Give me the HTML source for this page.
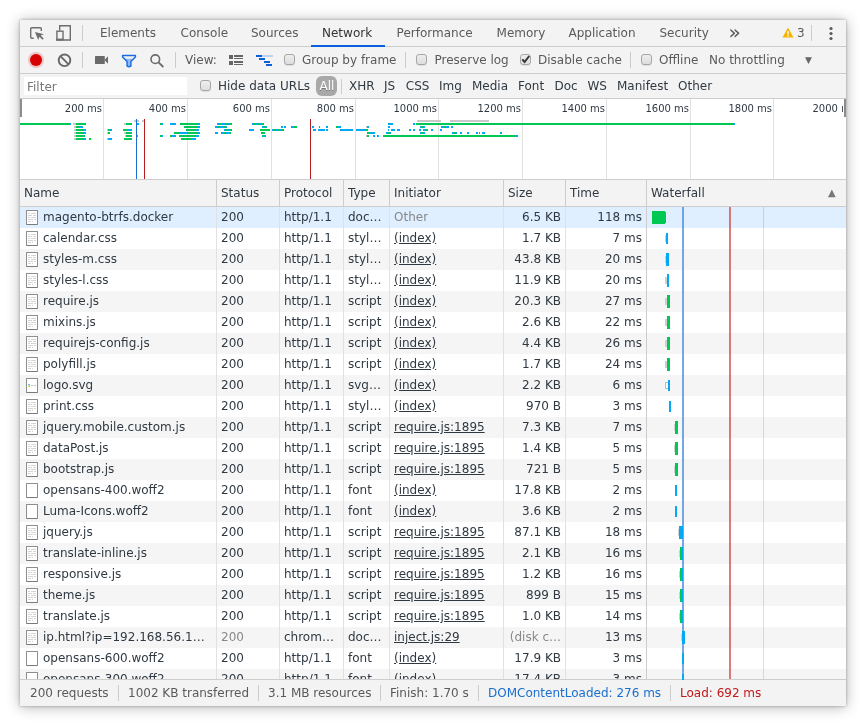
<!DOCTYPE html>
<html><head><meta charset="utf-8"><title>DevTools Network</title>
<style>
*{box-sizing:border-box;margin:0;padding:0}
html,body{width:866px;height:726px;background:#fff;overflow:hidden}
body{font-family:"DejaVu Sans","Liberation Sans",sans-serif;font-size:12px;color:#303942;position:relative}
#win{will-change:transform;position:absolute;left:20px;top:20px;width:826px;height:686px;background:#fff;overflow:hidden;box-shadow:0 0 3px rgba(0,0,0,.3),0 1px 13px rgba(0,0,0,.3)}
.tb{position:absolute;left:0;width:826px;height:27px;background:#f3f3f3;border-bottom:1px solid #cdcdcd}
#tb1{top:0}#tb2{top:27px}#tb3{top:54px;height:25px}
.t{position:absolute;white-space:nowrap;line-height:16px}
.tab{color:#5a5a5a;top:5px;font-size:12px}
.vsep{position:absolute;width:1px;background:#ccc}
#ov{position:absolute;left:0;top:79px;width:826px;height:81px;background:#fff;border-bottom:1px solid #cdcdcd;overflow:hidden}
#ov .g{position:absolute;top:0;width:1px;height:81px;background:#e1e1e1}
#ov .l{position:absolute;top:3px;font-size:10px;color:#303942;text-align:right;width:80px;line-height:14px;white-space:nowrap}
#ov i{position:absolute;display:block;height:2px}
#ov .v{position:absolute;top:20px;width:1px;height:60px}
#ov .h{position:absolute;top:0;width:2px;height:18px;background:#8c8c8c}
#hd{position:absolute;left:0;top:160px;width:826px;height:27px;background:#f3f3f3;border-bottom:1px solid #cdcdcd}
#hd span{position:absolute;top:0;height:26px;line-height:27px;padding-left:4px;border-left:1px solid #cdcdcd;font-size:12px;color:#303942}
#rows{position:absolute;left:0;top:187px;width:826px;height:473px;overflow:hidden}
.row{position:relative;height:21px;width:826px;background:#fff}
.row.odd{background:#f5f5f5}
.row.sel{background:#dfefff}
.c{position:absolute;top:0;height:21px;line-height:20px;white-space:nowrap;overflow:hidden;padding-left:4px;border-left:1px solid #e1e1e1;font-size:12px}
.c1{left:0;width:196px;border-left:0;padding-left:23px}
.c2{left:196px;width:63px}
.c3{left:259px;width:64px}
.c4{left:323px;width:46px}
.c5{left:369px;width:114px}
.c6{left:483px;width:62px;text-align:right;padding-right:4px}
.c7{left:545px;width:81px;text-align:right;padding-right:4px}
.c8{left:626px;width:200px;padding:0;border-left-color:#cdcdcd}
.c8 b{position:absolute;display:block}
.c u{text-decoration:none}
.lnk u{text-decoration:underline}
.gray{color:#888}
.dim{color:#888}
.ic{position:absolute;left:6px;top:3px;width:12px;height:15px;border:1px solid #8e8e8e;border-bottom-color:#7a7a7a;background:#fff;border-radius:1px}
.ic.doc:before{content:"";position:absolute;left:1px;top:2px;width:8px;height:9px;background:
linear-gradient(90deg,#d4d4d4 2px,transparent 2px,transparent 3px,#d4d4d4 3px) 0 0/8px 1px no-repeat,
linear-gradient(90deg,#d4d4d4 4px,transparent 4px,transparent 5px,#d4d4d4 5px) 0 2px/8px 1px no-repeat,
linear-gradient(90deg,#d4d4d4 2px,transparent 2px,transparent 3px,#d4d4d4 3px) 0 4px/8px 1px no-repeat,
linear-gradient(90deg,#d4d4d4 5px,transparent 5px,transparent 6px,#d4d4d4 6px) 0 6px/8px 1px no-repeat,
linear-gradient(90deg,#d4d4d4 3px,transparent 3px,transparent 4px,#d4d4d4 4px,#d4d4d4 5px,transparent 5px) 0 8px/8px 1px no-repeat}
.ic.img:before{content:"";position:absolute;left:1px;top:5px;width:8px;height:3px;background:
linear-gradient(90deg,#6ec6f0 1px,#9ccc65 1px) 0 0/2px 1px no-repeat,
linear-gradient(90deg,#c5e1a5 1px,#ffb199 1px) 0 1px/2px 1px no-repeat,
linear-gradient(90deg,#ffe96b 1px,#ef8a80 1px) 0 2px/2px 1px no-repeat,
linear-gradient(90deg,#c4c4c4 2px,transparent 2px,transparent 3px,#c4c4c4 3px) 3px 1px/5px 1px no-repeat}
#wl1,#wl2,#wl3{position:absolute;top:187px;height:473px}
#wl1{left:662px;width:2px;background:rgba(70,140,220,.75)}
#wl2{left:709px;width:2px;background:rgba(205,60,60,.68)}
#wl3{left:743px;width:1px;background:rgba(0,0,0,.12)}
#sb{position:absolute;left:0;top:659px;width:826px;height:27px;background:#f3f3f3;border-top:1px solid #cdcdcd}
#sb .t{top:5px;font-size:12px;color:#5a5a5a}
.cb{position:absolute;width:11px;height:11px;border:1px solid #a6a6a6;border-radius:3px;background:linear-gradient(#eee,#dedede);box-shadow:0 1px 0 rgba(0,0,0,.08)}
</style></head><body>
<div id="win">
 <div class="tb" id="tb1">
  <svg class="t" style="left:8px;top:5px" width="18" height="18" viewBox="0 0 18 18"><path d="M13.300 6V3.700a1 1 0 0 0-1-1H3.700a1 1 0 0 0-1 1v8.600a1 1 0 0 0 1 1H5.700" fill="none" stroke="#6e6e6e" stroke-width="1.400"/><path d="M7 7l3.200 8 1.300-3.200 3 3 1.200-1.200-3-3 3.200-1.300z" fill="#6e6e6e"/></svg>
  <svg class="t" style="left:34px;top:4px" width="20" height="18" viewBox="0 0 20 18"><path d="M5.700 6.500V1.700H16.300V16H9.500" fill="none" stroke="#6e6e6e" stroke-width="1.400"/><rect x="2.900" y="7.200" width="6.100" height="8.800" fill="none" stroke="#6e6e6e" stroke-width="1.400"/><rect x="2.200" y="14.600" width="7.500" height="2.100" fill="#6e6e6e"/></svg>
  <div class="vsep" style="left:62px;top:5px;height:16px"></div>
  <div class="t tab" style="left:80px">Elements</div>
  <div class="t tab" style="left:160.500px">Console</div>
  <div class="t tab" style="left:231px">Sources</div>
  <div class="t tab" style="left:302px;color:#333">Network</div>
  <div style="position:absolute;left:291px;top:25px;width:74px;height:2px;background:#0a60e0"></div>
  <div class="t tab" style="left:376.600px">Performance</div>
  <div class="t tab" style="left:476.600px">Memory</div>
  <div class="t tab" style="left:548.500px">Application</div>
  <div class="t tab" style="left:639.500px">Security</div>
  <div class="t tab" style="left:708.500px;font-size:20px;top:3.500px">»</div>
  <svg class="t" style="left:762px;top:7px" width="12" height="12" viewBox="0 0 12 12"><path d="M6 0.500L11.500 10.500H0.500z" fill="#f4b400"/><rect x="5.300" y="4" width="1.400" height="3.500" fill="#fff"/><rect x="5.300" y="8.300" width="1.400" height="1.300" fill="#fff"/></svg>
  <div class="t tab" style="left:777px">3</div>
  <div class="vsep" style="left:791px;top:5px;height:16px"></div>
  <svg class="t" style="left:807.500px;top:6px" width="6" height="16" viewBox="0 0 6 16"><circle cx="3" cy="2.500" r="1.600" fill="#5a5a5a"/><circle cx="3" cy="7.500" r="1.600" fill="#5a5a5a"/><circle cx="3" cy="12.500" r="1.600" fill="#5a5a5a"/></svg>
 </div>
 <div class="tb" id="tb2">
  <div style="position:absolute;left:10px;top:7px;width:12px;height:12px;border-radius:6px;background:#d80000;box-shadow:0 0 1px 2px rgba(216,0,0,.2)"></div>
  <svg class="t" style="left:37px;top:6px" width="15" height="15" viewBox="0 0 15 15"><circle cx="7.500" cy="7.300" r="5.800" fill="none" stroke="#686868" stroke-width="1.900"/><path d="M3.400 3.200L11.600 11.400" stroke="#686868" stroke-width="1.900"/></svg>
  <div class="vsep" style="left:62px;top:5px;height:16px"></div>
  <svg class="t" style="left:75px;top:8px" width="14" height="10" viewBox="0 0 14 10"><rect x="0" y="1" width="9.800" height="8" rx="0.600" fill="#6a6a6a"/><path d="M9.500 5L13 1.300V8.700z" fill="#6a6a6a"/></svg>
  <svg class="t" style="left:101px;top:7px" width="16" height="14" viewBox="0 0 16 14"><path d="M3.500 4.700H12.500L9.500 7.500V12H6.500V7.500z" fill="#8fb9f4"/><path d="M1.600 1.600H14.400V3L9.900 7.600V12.100Q8 13.300 6.100 12.100V7.600L1.600 3z" fill="none" stroke="#1a6de0" stroke-width="1.500" stroke-linejoin="round"/></svg>
  <svg class="t" style="left:129px;top:7px" width="16" height="15" viewBox="0 0 16 15"><circle cx="6.300" cy="5.200" r="4.300" fill="none" stroke="#6a6a6a" stroke-width="1.600"/><path d="M9.300 8.200L14.300 13" stroke="#6a6a6a" stroke-width="1.800"/></svg>
  <div class="vsep" style="left:155px;top:5px;height:16px"></div>
  <div class="t" style="left:165px;top:5px;color:#5a5a5a;font-size:12px">View:</div>
  <svg class="t" style="left:209px;top:8px" width="14" height="10" viewBox="0 0 14 10"><g fill="#666"><rect x="0" y="0" width="4" height="4"/><rect x="5" y="0" width="9" height="2"/><rect x="5" y="3" width="9" height="1"/><rect x="0" y="6" width="4" height="4"/><rect x="5" y="6" width="9" height="2"/><rect x="5" y="9" width="9" height="1"/></g></svg>
  <svg class="t" style="left:236px;top:8px" width="17" height="11" viewBox="0 0 17 11"><g fill="#0b60dc"><rect x="0" y="0" width="6" height="2"/><rect x="3" y="3" width="6" height="2"/><rect x="8" y="6" width="6" height="2"/><rect x="10" y="9" width="6" height="2"/></g><rect x="6" y="0" width="11" height="2" fill="#bcd3f5"/></svg>
  <div class="cb" style="left:264px;top:7px"></div>
  <div class="t" style="left:282px;top:5px;color:#5a5a5a;font-size:12px">Group by frame</div>
  <div class="vsep" style="left:385px;top:5px;height:16px"></div>
  <div class="cb" style="left:396px;top:7px"></div>
  <div class="t" style="left:414.500px;top:5px;color:#5a5a5a;font-size:12px">Preserve log</div>
  <div class="cb" style="left:500px;top:7px"></div>
  <svg class="t" style="left:501px;top:8px" width="10" height="10" viewBox="0 0 10 10"><path d="M1.300 4.300L3.600 7 8.200 1" fill="none" stroke="#333" stroke-width="2"/></svg>
  <div class="t" style="left:518px;top:5px;color:#5a5a5a;font-size:12px">Disable cache</div>
  <div class="vsep" style="left:610px;top:5px;height:16px"></div>
  <div class="cb" style="left:621px;top:7px"></div>
  <div class="t" style="left:639px;top:5px;color:#5a5a5a;font-size:12px">Offline</div>
  <div class="t" style="left:689px;top:5px;color:#5a5a5a;font-size:12px">No throttling</div>
  <div class="t" style="left:785px;top:4.500px;color:#666;font-size:9px">▼</div>
 </div>
 <div class="tb" id="tb3">
  <div style="position:absolute;left:4px;top:3px;width:163px;height:18px;background:#fff"></div>
  <div class="t" style="left:7px;top:5px;color:#777;font-size:12px">Filter</div>
  <div class="cb" style="left:180px;top:6px"></div>
  <div class="t" style="left:198px;top:4px;color:#303942;font-size:12px">Hide data URLs</div>
  <div style="position:absolute;left:296px;top:2px;width:21px;height:20px;border-radius:6px;background:#a8a8a8"></div>
  <div class="t" style="left:299.500px;top:4px;color:#fff;font-size:12px;text-shadow:0 1px 0 rgba(0,0,0,.3)">All</div>
  <div class="vsep" style="left:321px;top:5px;height:15px"></div>
  <div class="t" style="left:329px;top:4px;color:#303942;font-size:12px">XHR</div>
  <div class="t" style="left:364px;top:4px;color:#303942;font-size:12px">JS</div>
  <div class="t" style="left:385.800px;top:4px;color:#303942;font-size:12px">CSS</div>
  <div class="t" style="left:419px;top:4px;color:#303942;font-size:12px">Img</div>
  <div class="t" style="left:452px;top:4px;color:#303942;font-size:12px">Media</div>
  <div class="t" style="left:498px;top:4px;color:#303942;font-size:12px">Font</div>
  <div class="t" style="left:534.500px;top:4px;color:#303942;font-size:12px">Doc</div>
  <div class="t" style="left:567.500px;top:4px;color:#303942;font-size:12px">WS</div>
  <div class="t" style="left:597px;top:4px;color:#303942;font-size:12px">Manifest</div>
  <div class="t" style="left:658px;top:4px;color:#303942;font-size:12px">Other</div>
 </div>
 <div id="ov">
  <div class="g" style="left:83px"></div>
<div class="l" style="left:2px">200 ms</div>
<div class="g" style="left:167px"></div>
<div class="l" style="left:86px">400 ms</div>
<div class="g" style="left:251px"></div>
<div class="l" style="left:170px">600 ms</div>
<div class="g" style="left:335px"></div>
<div class="l" style="left:254px">800 ms</div>
<div class="g" style="left:418px"></div>
<div class="l" style="left:337px">1000 ms</div>
<div class="g" style="left:502px"></div>
<div class="l" style="left:421px">1200 ms</div>
<div class="g" style="left:586px"></div>
<div class="l" style="left:505px">1400 ms</div>
<div class="g" style="left:670px"></div>
<div class="l" style="left:589px">1600 ms</div>
<div class="g" style="left:753px"></div>
<div class="l" style="left:672px">1800 ms</div>
<div class="l" style="left:754px;text-align:left;width:30.500px;overflow:hidden;left:792.500px">2000 ms</div>
<i style="left:0px;top:24px;width:49px;background:#00c853"></i>
<i style="left:49px;top:24px;width:1.5px;background:#03a9f4"></i>
<i style="left:53px;top:24px;width:3px;background:#c8c8c8"></i>
<i style="left:56px;top:24px;width:9.5px;background:#00c853"></i>
<i style="left:54px;top:27px;width:2px;background:#c8c8c8"></i>
<i style="left:56px;top:27px;width:3px;background:#00c853"></i>
<i style="left:59px;top:27px;width:4px;background:#03a9f4"></i>
<i style="left:54px;top:30px;width:2px;background:#c8c8c8"></i>
<i style="left:56px;top:30px;width:7px;background:#00c853"></i>
<i style="left:63px;top:30px;width:2.5px;background:#03a9f4"></i>
<i style="left:54px;top:33px;width:2px;background:#c8c8c8"></i>
<i style="left:56px;top:33px;width:7px;background:#00c853"></i>
<i style="left:63px;top:33px;width:3px;background:#03a9f4"></i>
<i style="left:54px;top:36px;width:2px;background:#c8c8c8"></i>
<i style="left:56px;top:36px;width:8.5px;background:#00c853"></i>
<i style="left:54px;top:39px;width:2px;background:#c8c8c8"></i>
<i style="left:56px;top:39px;width:8px;background:#00c853"></i>
<i style="left:64px;top:39px;width:2px;background:#03a9f4"></i>
<i style="left:69px;top:39px;width:1.5px;background:#00c853"></i>
<i style="left:87px;top:30px;width:1px;background:#c8c8c8"></i>
<i style="left:88px;top:30px;width:2px;background:#00c853"></i>
<i style="left:90px;top:30px;width:2px;background:#03a9f4"></i>
<i style="left:87px;top:33px;width:1px;background:#c8c8c8"></i>
<i style="left:88px;top:33px;width:1.5px;background:#00c853"></i>
<i style="left:86.5px;top:39px;width:1.5px;background:#c8c8c8"></i>
<i style="left:88px;top:39px;width:4px;background:#03a9f4"></i>
<i style="left:104px;top:24px;width:2px;background:#c8c8c8"></i>
<i style="left:106px;top:24px;width:6px;background:#00c853"></i>
<i style="left:116px;top:24px;width:3px;background:#03a9f4"></i>
<i style="left:103px;top:30px;width:4px;background:#00c853"></i>
<i style="left:107px;top:30px;width:4.5px;background:#03a9f4"></i>
<i style="left:104px;top:33px;width:2px;background:#c8c8c8"></i>
<i style="left:106px;top:33px;width:5.5px;background:#00c853"></i>
<i style="left:105px;top:36px;width:1px;background:#c8c8c8"></i>
<i style="left:106px;top:36px;width:5.5px;background:#00c853"></i>
<i style="left:115.5px;top:36px;width:2.5px;background:#03a9f4"></i>
<i style="left:104px;top:39px;width:7.5px;background:#00c853"></i>
<i style="left:140px;top:24px;width:1.5px;background:#00c853"></i>
<i style="left:141.5px;top:24px;width:1.5px;background:#03a9f4"></i>
<i style="left:150px;top:24px;width:6px;background:#03a9f4"></i>
<i style="left:160px;top:24px;width:9px;background:#00c853"></i>
<i style="left:169px;top:24px;width:1px;background:#03a9f4"></i>
<i style="left:170px;top:24px;width:7px;background:#00c853"></i>
<i style="left:177px;top:24px;width:3px;background:#03a9f4"></i>
<i style="left:164px;top:27px;width:14px;background:#00c853"></i>
<i style="left:178px;top:27px;width:2px;background:#03a9f4"></i>
<i style="left:166px;top:30px;width:10px;background:#00c853"></i>
<i style="left:176px;top:30px;width:3px;background:#03a9f4"></i>
<i style="left:154px;top:33px;width:6px;background:#00c853"></i>
<i style="left:160px;top:33px;width:8px;background:#03a9f4"></i>
<i style="left:168px;top:33px;width:10px;background:#00c853"></i>
<i style="left:178px;top:33px;width:2px;background:#03a9f4"></i>
<i style="left:140px;top:36px;width:1px;background:#00c853"></i>
<i style="left:141px;top:36px;width:2px;background:#03a9f4"></i>
<i style="left:150px;top:36px;width:2px;background:#00c853"></i>
<i style="left:152px;top:36px;width:4px;background:#03a9f4"></i>
<i style="left:159px;top:36px;width:17px;background:#00c853"></i>
<i style="left:176px;top:36px;width:3px;background:#03a9f4"></i>
<i style="left:161px;top:39px;width:10px;background:#00c853"></i>
<i style="left:171px;top:39px;width:5px;background:#03a9f4"></i>
<i style="left:197px;top:24px;width:2px;background:#03a9f4"></i>
<i style="left:199px;top:24px;width:1.5px;background:#00c853"></i>
<i style="left:200.5px;top:24px;width:2px;background:#03a9f4"></i>
<i style="left:202.5px;top:24px;width:1.5px;background:#00c853"></i>
<i style="left:204px;top:24px;width:2px;background:#03a9f4"></i>
<i style="left:206px;top:24px;width:1.5px;background:#00c853"></i>
<i style="left:207.5px;top:24px;width:2px;background:#03a9f4"></i>
<i style="left:209.5px;top:24px;width:1.5px;background:#00c853"></i>
<i style="left:211px;top:24px;width:1px;background:#03a9f4"></i>
<i style="left:232px;top:24px;width:2px;background:#03a9f4"></i>
<i style="left:234px;top:24px;width:1.5px;background:#00c853"></i>
<i style="left:235.5px;top:24px;width:2px;background:#03a9f4"></i>
<i style="left:237.5px;top:24px;width:1.5px;background:#00c853"></i>
<i style="left:239px;top:24px;width:2px;background:#03a9f4"></i>
<i style="left:241px;top:24px;width:1.5px;background:#00c853"></i>
<i style="left:242.5px;top:24px;width:1.5px;background:#03a9f4"></i>
<i style="left:195px;top:27px;width:2px;background:#03a9f4"></i>
<i style="left:197px;top:27px;width:1.5px;background:#00c853"></i>
<i style="left:198.5px;top:27px;width:2px;background:#03a9f4"></i>
<i style="left:200.5px;top:27px;width:1.5px;background:#00c853"></i>
<i style="left:202px;top:27px;width:2px;background:#03a9f4"></i>
<i style="left:204px;top:27px;width:1.5px;background:#00c853"></i>
<i style="left:205.5px;top:27px;width:0.5px;background:#03a9f4"></i>
<i style="left:242px;top:27px;width:2px;background:#03a9f4"></i>
<i style="left:244px;top:27px;width:1.5px;background:#00c853"></i>
<i style="left:245.5px;top:27px;width:1.5px;background:#03a9f4"></i>
<i style="left:261px;top:27px;width:2px;background:#03a9f4"></i>
<i style="left:264px;top:27px;width:2px;background:#03a9f4"></i>
<i style="left:271px;top:27px;width:3px;background:#03a9f4"></i>
<i style="left:274px;top:27px;width:3px;background:#00c853"></i>
<i style="left:204px;top:30px;width:2px;background:#03a9f4"></i>
<i style="left:206px;top:30px;width:1.5px;background:#00c853"></i>
<i style="left:207.5px;top:30px;width:2px;background:#03a9f4"></i>
<i style="left:209.5px;top:30px;width:1.5px;background:#00c853"></i>
<i style="left:211px;top:30px;width:1px;background:#03a9f4"></i>
<i style="left:229px;top:30px;width:5px;background:#03a9f4"></i>
<i style="left:240px;top:30px;width:10px;background:#00c853"></i>
<i style="left:252px;top:30px;width:2px;background:#03a9f4"></i>
<i style="left:254px;top:30px;width:1.5px;background:#00c853"></i>
<i style="left:255.5px;top:30px;width:2px;background:#03a9f4"></i>
<i style="left:257.5px;top:30px;width:1.5px;background:#00c853"></i>
<i style="left:259px;top:30px;width:2px;background:#03a9f4"></i>
<i style="left:261px;top:30px;width:1.5px;background:#00c853"></i>
<i style="left:262.5px;top:30px;width:0.5px;background:#03a9f4"></i>
<i style="left:195px;top:33px;width:3px;background:#03a9f4"></i>
<i style="left:201px;top:33px;width:2px;background:#03a9f4"></i>
<i style="left:203px;top:33px;width:1.5px;background:#00c853"></i>
<i style="left:204.5px;top:33px;width:2px;background:#03a9f4"></i>
<i style="left:206.5px;top:33px;width:1.5px;background:#00c853"></i>
<i style="left:208px;top:33px;width:2px;background:#03a9f4"></i>
<i style="left:210px;top:33px;width:1px;background:#00c853"></i>
<i style="left:241px;top:33px;width:4px;background:#00c853"></i>
<i style="left:242px;top:36px;width:2px;background:#00c853"></i>
<i style="left:244px;top:36px;width:2px;background:#03a9f4"></i>
<i style="left:292px;top:27px;width:2px;background:#03a9f4"></i>
<i style="left:299px;top:27px;width:1px;background:#03a9f4"></i>
<i style="left:306px;top:27px;width:2px;background:#03a9f4"></i>
<i style="left:293px;top:30px;width:3px;background:#03a9f4"></i>
<i style="left:298px;top:30px;width:7px;background:#03a9f4"></i>
<i style="left:306px;top:30px;width:2px;background:#03a9f4"></i>
<i style="left:316px;top:27px;width:2px;background:#00c853"></i>
<i style="left:318px;top:27px;width:3px;background:#03a9f4"></i>
<i style="left:346px;top:27px;width:1px;background:#c8c8c8"></i>
<i style="left:347px;top:27px;width:2px;background:#03a9f4"></i>
<i style="left:368px;top:27px;width:2px;background:#03a9f4"></i>
<i style="left:400px;top:27px;width:2px;background:#03a9f4"></i>
<i style="left:402px;top:27px;width:1.5px;background:#00c853"></i>
<i style="left:403.5px;top:27px;width:1.5px;background:#03a9f4"></i>
<i style="left:421px;top:27px;width:2px;background:#03a9f4"></i>
<i style="left:423px;top:27px;width:1.5px;background:#00c853"></i>
<i style="left:424.5px;top:27px;width:2px;background:#03a9f4"></i>
<i style="left:426.5px;top:27px;width:1.5px;background:#00c853"></i>
<i style="left:428px;top:27px;width:1px;background:#03a9f4"></i>
<i style="left:431px;top:27px;width:2px;background:#03a9f4"></i>
<i style="left:320px;top:30px;width:13px;background:#03a9f4"></i>
<i style="left:336px;top:30px;width:10px;background:#03a9f4"></i>
<i style="left:346px;top:30px;width:2px;background:#00c853"></i>
<i style="left:368px;top:30px;width:1px;background:#03a9f4"></i>
<i style="left:371px;top:30px;width:4px;background:#03a9f4"></i>
<i style="left:377px;top:30px;width:3px;background:#03a9f4"></i>
<i style="left:389px;top:30px;width:1.5px;background:#03a9f4"></i>
<i style="left:393px;top:30px;width:1.5px;background:#03a9f4"></i>
<i style="left:411px;top:30px;width:1.5px;background:#03a9f4"></i>
<i style="left:420px;top:30px;width:1.5px;background:#03a9f4"></i>
<i style="left:399px;top:30px;width:2px;background:#03a9f4"></i>
<i style="left:403px;top:30px;width:2px;background:#03a9f4"></i>
<i style="left:405px;top:30px;width:1.5px;background:#00c853"></i>
<i style="left:406.5px;top:30px;width:0.5px;background:#03a9f4"></i>
<i style="left:347px;top:33px;width:2px;background:#00c853"></i>
<i style="left:349px;top:33px;width:6px;background:#03a9f4"></i>
<i style="left:366px;top:33px;width:2px;background:#03a9f4"></i>
<i style="left:368px;top:33px;width:1.5px;background:#00c853"></i>
<i style="left:369.5px;top:33px;width:0.5px;background:#03a9f4"></i>
<i style="left:400px;top:33px;width:2px;background:#03a9f4"></i>
<i style="left:402px;top:33px;width:1.5px;background:#00c853"></i>
<i style="left:403.5px;top:33px;width:1.5px;background:#03a9f4"></i>
<i style="left:432px;top:33px;width:2px;background:#03a9f4"></i>
<i style="left:434px;top:33px;width:1.5px;background:#00c853"></i>
<i style="left:435.5px;top:33px;width:0.5px;background:#03a9f4"></i>
<i style="left:440px;top:33px;width:2px;background:#03a9f4"></i>
<i style="left:447px;top:33px;width:2px;background:#03a9f4"></i>
<i style="left:456px;top:33px;width:2px;background:#03a9f4"></i>
<i style="left:459px;top:33px;width:1px;background:#03a9f4"></i>
<i style="left:462px;top:33px;width:3px;background:#03a9f4"></i>
<i style="left:480px;top:33px;width:2px;background:#03a9f4"></i>
<i style="left:346px;top:36px;width:1px;background:#c8c8c8"></i>
<i style="left:347px;top:36px;width:2px;background:#00c853"></i>
<i style="left:353px;top:36px;width:1.5px;background:#03a9f4"></i>
<i style="left:357px;top:36px;width:1.5px;background:#03a9f4"></i>
<i style="left:363px;top:36px;width:133px;background:#00c853"></i>
<i style="left:496px;top:36px;width:1.5px;background:#03a9f4"></i>
<i style="left:368px;top:24px;width:5px;background:#03a9f4"></i>
<i style="left:393px;top:24px;width:2px;background:#03a9f4"></i>
<i style="left:396px;top:24px;width:318px;background:#00c853"></i>
<i style="left:714px;top:24px;width:1px;background:#03a9f4"></i>
<i style="left:114px;top:21px;width:5px;background:#c8c8c8"></i>
<i style="left:122px;top:21px;width:2px;background:#c8c8c8"></i>
<i style="left:397px;top:21px;width:24px;background:#c8c8c8"></i>
<i style="left:430px;top:21px;width:39px;background:#c8c8c8"></i>
<div class="v" style="left:116px;background:#1a6fd0"></div>
<div class="v" style="left:124px;background:#b91c1c"></div>
<div class="v" style="left:290px;background:#b91c1c"></div>
<div class="h" style="left:0"></div><div class="h" style="left:824px"></div>
 </div>
 <div id="hd">
  <span style="left:0;width:196px;border-left:0">Name</span>
  <span style="left:196px;width:63px">Status</span>
  <span style="left:259px;width:64px">Protocol</span>
  <span style="left:323px;width:46px">Type</span>
  <span style="left:369px;width:114px">Initiator</span>
  <span style="left:483px;width:62px">Size</span>
  <span style="left:545px;width:81px">Time</span>
  <span style="left:626px;width:200px">Waterfall</span>
  <div class="t" style="left:808px;top:5px;font-size:10px;color:#777">▲</div>
 </div>
 <div id="rows">
<div class="row sel"><span class="c c1"><i class="ic doc"></i>magento-btrfs.docker</span><span class="c c2">200</span><span class="c c3">http/1.1</span><span class="c c4">doc…</span><span class="c c5 gray"><u>Other</u></span><span class="c c6">6.5 KB</span><span class="c c7">118 ms</span><span class="c c8"><b style="left:5px;width:13px;background:#00c853;height:13px;top:4px;z-index:2"></b><b style="left:18px;width:1px;background:#03a9f4;height:11px;top:5px;z-index:2"></b></span></div>
<div class="row "><span class="c c1"><i class="ic doc"></i>calendar.css</span><span class="c c2">200</span><span class="c c3">http/1.1</span><span class="c c4">styl…</span><span class="c c5 lnk"><u>(index)</u></span><span class="c c6">1.7 KB</span><span class="c c7">7 ms</span><span class="c c8"><b style="left:18px;width:1px;background:#cfcfcf;height:7px;top:7px;z-index:2"></b><b style="left:19px;width:2px;background:#03a9f4;height:11px;top:5px;z-index:2"></b></span></div>
<div class="row odd"><span class="c c1"><i class="ic doc"></i>styles-m.css</span><span class="c c2">200</span><span class="c c3">http/1.1</span><span class="c c4">styl…</span><span class="c c5 lnk"><u>(index)</u></span><span class="c c6">43.8 KB</span><span class="c c7">20 ms</span><span class="c c8"><b style="left:18px;width:1px;background:#cfcfcf;height:7px;top:7px;z-index:2"></b><b style="left:19px;width:3px;background:#03a9f4;height:13px;top:4px;z-index:2"></b></span></div>
<div class="row "><span class="c c1"><i class="ic doc"></i>styles-l.css</span><span class="c c2">200</span><span class="c c3">http/1.1</span><span class="c c4">styl…</span><span class="c c5 lnk"><u>(index)</u></span><span class="c c6">11.9 KB</span><span class="c c7">20 ms</span><span class="c c8"><b style="left:18px;width:2px;background:#cfcfcf;height:7px;top:7px;z-index:2"></b><b style="left:20px;width:1px;background:#00c853;height:13px;top:4px;z-index:2"></b><b style="left:21px;width:1px;background:#03a9f4;height:13px;top:4px;z-index:2"></b></span></div>
<div class="row odd"><span class="c c1"><i class="ic doc"></i>require.js</span><span class="c c2">200</span><span class="c c3">http/1.1</span><span class="c c4">script</span><span class="c c5 lnk"><u>(index)</u></span><span class="c c6">20.3 KB</span><span class="c c7">27 ms</span><span class="c c8"><b style="left:18px;width:2px;background:#cfcfcf;height:7px;top:7px;z-index:2"></b><b style="left:20px;width:3px;background:#00c853;height:13px;top:4px;z-index:2"></b></span></div>
<div class="row "><span class="c c1"><i class="ic doc"></i>mixins.js</span><span class="c c2">200</span><span class="c c3">http/1.1</span><span class="c c4">script</span><span class="c c5 lnk"><u>(index)</u></span><span class="c c6">2.6 KB</span><span class="c c7">22 ms</span><span class="c c8"><b style="left:18px;width:2px;background:#cfcfcf;height:7px;top:7px;z-index:2"></b><b style="left:20px;width:3px;background:#00c853;height:13px;top:4px;z-index:2"></b></span></div>
<div class="row odd"><span class="c c1"><i class="ic doc"></i>requirejs-config.js</span><span class="c c2">200</span><span class="c c3">http/1.1</span><span class="c c4">script</span><span class="c c5 lnk"><u>(index)</u></span><span class="c c6">4.4 KB</span><span class="c c7">26 ms</span><span class="c c8"><b style="left:18px;width:2px;background:#cfcfcf;height:7px;top:7px;z-index:2"></b><b style="left:20px;width:3px;background:#00c853;height:13px;top:4px;z-index:2"></b></span></div>
<div class="row "><span class="c c1"><i class="ic doc"></i>polyfill.js</span><span class="c c2">200</span><span class="c c3">http/1.1</span><span class="c c4">script</span><span class="c c5 lnk"><u>(index)</u></span><span class="c c6">1.7 KB</span><span class="c c7">24 ms</span><span class="c c8"><b style="left:18px;width:2px;background:#cfcfcf;height:7px;top:7px;z-index:2"></b><b style="left:20px;width:3px;background:#00c853;height:13px;top:4px;z-index:2"></b></span></div>
<div class="row odd"><span class="c c1"><i class="ic img"></i>logo.svg</span><span class="c c2">200</span><span class="c c3">http/1.1</span><span class="c c4">svg…</span><span class="c c5 lnk"><u>(index)</u></span><span class="c c6">2.2 KB</span><span class="c c7">6 ms</span><span class="c c8"><b style="left:18px;width:3px;background:#bdbdbd;height:7px;top:7px;z-index:2"></b><b style="left:19px;width:2px;background:#fff;height:5px;top:8px;z-index:2"></b><b style="left:21px;width:2px;background:#03a9f4;height:11px;top:5px;z-index:2"></b></span></div>
<div class="row "><span class="c c1"><i class="ic doc"></i>print.css</span><span class="c c2">200</span><span class="c c3">http/1.1</span><span class="c c4">styl…</span><span class="c c5 lnk"><u>(index)</u></span><span class="c c6">970 B</span><span class="c c7">3 ms</span><span class="c c8"><b style="left:22px;width:2px;background:#03a9f4;height:11px;top:5px;z-index:2"></b></span></div>
<div class="row odd"><span class="c c1"><i class="ic doc"></i>jquery.mobile.custom.js</span><span class="c c2">200</span><span class="c c3">http/1.1</span><span class="c c4">script</span><span class="c c5 lnk"><u>require.js:1895</u></span><span class="c c6">7.3 KB</span><span class="c c7">7 ms</span><span class="c c8"><b style="left:27px;width:1px;background:#cfcfcf;height:7px;top:7px;z-index:2"></b><b style="left:28px;width:1.5px;background:#00c853;height:13px;top:4px;z-index:2"></b><b style="left:29.5px;width:0.5px;background:#03a9f4;height:13px;top:4px;z-index:2"></b></span></div>
<div class="row "><span class="c c1"><i class="ic doc"></i>dataPost.js</span><span class="c c2">200</span><span class="c c3">http/1.1</span><span class="c c4">script</span><span class="c c5 lnk"><u>require.js:1895</u></span><span class="c c6">1.4 KB</span><span class="c c7">5 ms</span><span class="c c8"><b style="left:27px;width:1px;background:#cfcfcf;height:7px;top:7px;z-index:2"></b><b style="left:28px;width:1.5px;background:#00c853;height:13px;top:4px;z-index:2"></b><b style="left:29.5px;width:0.5px;background:#03a9f4;height:13px;top:4px;z-index:2"></b></span></div>
<div class="row odd"><span class="c c1"><i class="ic doc"></i>bootstrap.js</span><span class="c c2">200</span><span class="c c3">http/1.1</span><span class="c c4">script</span><span class="c c5 lnk"><u>require.js:1895</u></span><span class="c c6">721 B</span><span class="c c7">5 ms</span><span class="c c8"><b style="left:27px;width:1px;background:#cfcfcf;height:7px;top:7px;z-index:2"></b><b style="left:28px;width:1.5px;background:#00c853;height:13px;top:4px;z-index:2"></b><b style="left:29.5px;width:0.5px;background:#03a9f4;height:13px;top:4px;z-index:2"></b></span></div>
<div class="row "><span class="c c1"><i class="ic blank"></i>opensans-400.woff2</span><span class="c c2">200</span><span class="c c3">http/1.1</span><span class="c c4">font</span><span class="c c5 lnk"><u>(index)</u></span><span class="c c6">17.8 KB</span><span class="c c7">2 ms</span><span class="c c8"><b style="left:28px;width:2px;background:#03a9f4;height:11px;top:5px;z-index:2"></b></span></div>
<div class="row odd"><span class="c c1"><i class="ic blank"></i>Luma-Icons.woff2</span><span class="c c2">200</span><span class="c c3">http/1.1</span><span class="c c4">font</span><span class="c c5 lnk"><u>(index)</u></span><span class="c c6">3.6 KB</span><span class="c c7">2 ms</span><span class="c c8"><b style="left:28px;width:2px;background:#03a9f4;height:11px;top:5px;z-index:2"></b></span></div>
<div class="row "><span class="c c1"><i class="ic doc"></i>jquery.js</span><span class="c c2">200</span><span class="c c3">http/1.1</span><span class="c c4">script</span><span class="c c5 lnk"><u>require.js:1895</u></span><span class="c c6">87.1 KB</span><span class="c c7">18 ms</span><span class="c c8"><b style="left:31px;width:1px;background:#cfcfcf;height:7px;top:7px;z-index:2"></b><b style="left:32px;width:4px;background:#03a9f4;height:13px;top:4px;z-index:2"></b></span></div>
<div class="row odd"><span class="c c1"><i class="ic doc"></i>translate-inline.js</span><span class="c c2">200</span><span class="c c3">http/1.1</span><span class="c c4">script</span><span class="c c5 lnk"><u>require.js:1895</u></span><span class="c c6">2.1 KB</span><span class="c c7">16 ms</span><span class="c c8"><b style="left:32px;width:1px;background:#cfcfcf;height:7px;top:7px;z-index:2"></b><b style="left:33px;width:2px;background:#00c853;height:13px;top:4px;z-index:2"></b><b style="left:35px;width:1px;background:#03a9f4;height:13px;top:4px;z-index:2"></b></span></div>
<div class="row "><span class="c c1"><i class="ic doc"></i>responsive.js</span><span class="c c2">200</span><span class="c c3">http/1.1</span><span class="c c4">script</span><span class="c c5 lnk"><u>require.js:1895</u></span><span class="c c6">1.2 KB</span><span class="c c7">16 ms</span><span class="c c8"><b style="left:32px;width:1px;background:#cfcfcf;height:7px;top:7px;z-index:2"></b><b style="left:33px;width:2px;background:#00c853;height:13px;top:4px;z-index:2"></b><b style="left:35px;width:1px;background:#03a9f4;height:13px;top:4px;z-index:2"></b></span></div>
<div class="row odd"><span class="c c1"><i class="ic doc"></i>theme.js</span><span class="c c2">200</span><span class="c c3">http/1.1</span><span class="c c4">script</span><span class="c c5 lnk"><u>require.js:1895</u></span><span class="c c6">899 B</span><span class="c c7">15 ms</span><span class="c c8"><b style="left:32px;width:1px;background:#cfcfcf;height:7px;top:7px;z-index:2"></b><b style="left:33px;width:2px;background:#00c853;height:13px;top:4px;z-index:2"></b><b style="left:35px;width:1px;background:#03a9f4;height:13px;top:4px;z-index:2"></b></span></div>
<div class="row "><span class="c c1"><i class="ic doc"></i>translate.js</span><span class="c c2">200</span><span class="c c3">http/1.1</span><span class="c c4">script</span><span class="c c5 lnk"><u>require.js:1895</u></span><span class="c c6">1.0 KB</span><span class="c c7">14 ms</span><span class="c c8"><b style="left:32px;width:1px;background:#cfcfcf;height:7px;top:7px;z-index:2"></b><b style="left:33px;width:2px;background:#00c853;height:13px;top:4px;z-index:2"></b><b style="left:35px;width:1px;background:#03a9f4;height:13px;top:4px;z-index:2"></b></span></div>
<div class="row odd"><span class="c c1"><i class="ic doc"></i>ip.html?ip=192.168.56.1…</span><span class="c c2 dim">200</span><span class="c c3">chrom…</span><span class="c c4">doc…</span><span class="c c5 lnk"><u>inject.js:29</u></span><span class="c c6 dim">(disk c…</span><span class="c c7">13 ms</span><span class="c c8"><b style="left:34px;width:1px;background:#cfcfcf;height:7px;top:7px;z-index:2"></b><b style="left:35px;width:3px;background:#03a9f4;height:13px;top:4px;z-index:2"></b></span></div>
<div class="row "><span class="c c1"><i class="ic blank"></i>opensans-600.woff2</span><span class="c c2">200</span><span class="c c3">http/1.1</span><span class="c c4">font</span><span class="c c5 lnk"><u>(index)</u></span><span class="c c6">17.9 KB</span><span class="c c7">3 ms</span><span class="c c8"><b style="left:35px;width:2px;background:#03a9f4;height:11px;top:5px;z-index:2"></b></span></div>
<div class="row odd"><span class="c c1"><i class="ic blank"></i>opensans-300.woff2</span><span class="c c2">200</span><span class="c c3">http/1.1</span><span class="c c4">font</span><span class="c c5 lnk"><u>(index)</u></span><span class="c c6">17.4 KB</span><span class="c c7">3 ms</span><span class="c c8"><b style="left:35px;width:2px;background:#03a9f4;height:11px;top:5px;z-index:2"></b></span></div>
 </div>
 <div id="wl3"></div><div id="wl1"></div><div id="wl2"></div>
 <div id="sb">
  <div class="t" style="left:10px">200 requests</div>
  <div class="vsep" style="left:98px;top:5px;height:16px"></div>
  <div class="t" style="left:108px">1002 KB transferred</div>
  <div class="vsep" style="left:238px;top:5px;height:16px"></div>
  <div class="t" style="left:248px">3.1 MB resources</div>
  <div class="vsep" style="left:360px;top:5px;height:16px"></div>
  <div class="t" style="left:370px">Finish: 1.70 s</div>
  <div class="vsep" style="left:458px;top:5px;height:16px"></div>
  <div class="t" style="left:468px;color:#1a6fd0">DOMContentLoaded: 276 ms</div>
  <div class="vsep" style="left:650px;top:5px;height:16px"></div>
  <div class="t" style="left:660px;color:#c0191a">Load: 692 ms</div>
 </div>
</div>
</body></html>
